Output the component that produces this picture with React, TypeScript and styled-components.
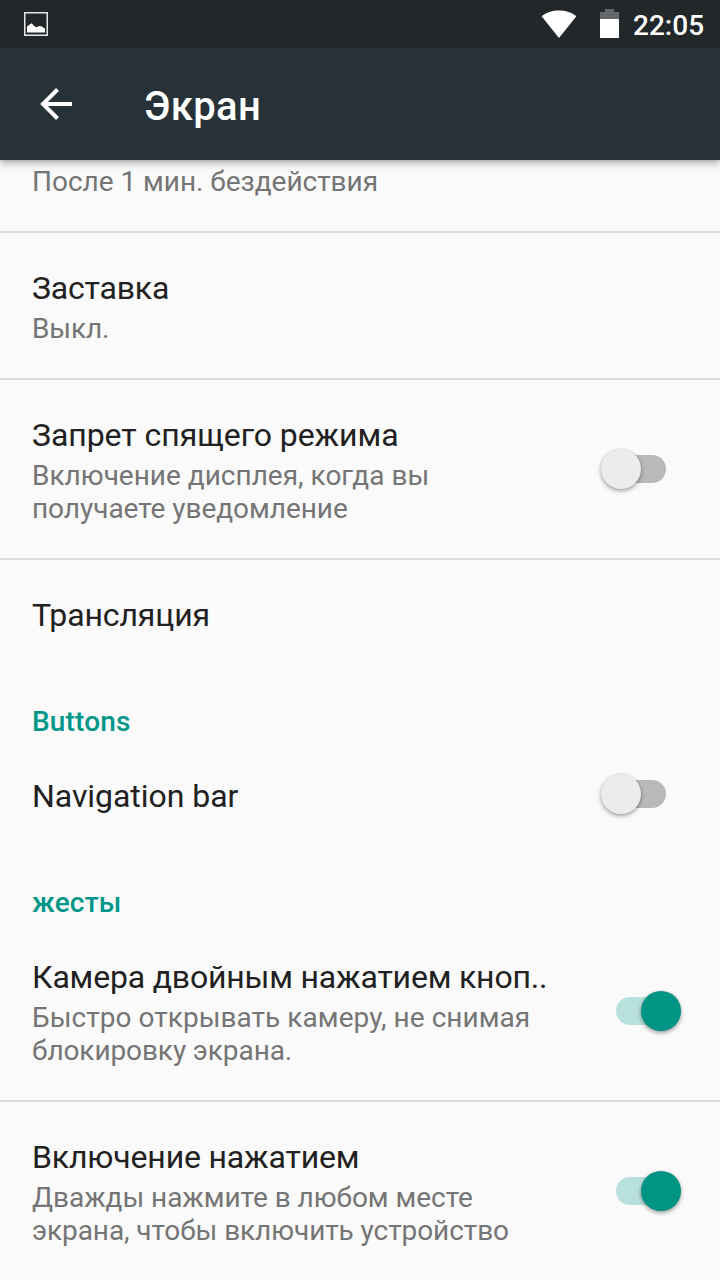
import React from "react";
import styled, { createGlobalStyle } from "styled-components";

const GlobalStyle = createGlobalStyle`
  *, *::before, *::after { box-sizing: border-box; }
  html, body { margin: 0; padding: 0; background: #fafafa; }
  body { font-family: Roboto, "Noto Sans", sans-serif; overflow: hidden; }
`;

const Screen = styled.div`
  display: flex;
  flex-direction: column;
  width: 720px;
  height: 1280px;
  overflow: hidden;
  background: #fafafa;
`;

const StatusBar = styled.header`
  position: relative;
  z-index: 2;
  display: flex;
  align-items: center;
  flex: none;
  height: 48px;
  padding: 0 16px 0 24px;
  background: #22272a;
`;

const StatusIcons = styled.div`
  display: flex;
  align-items: center;
  margin-left: auto;
`;

const WifiIcon = styled.svg`
  display: block;
  margin-right: 23px;
`;

const BatteryIcon = styled.svg`
  display: block;
  margin: 0 14px 2px 0;
`;

const Clock = styled.time`
  width: 71px;
  padding-top: 3px;
  color: #fff;
  font-size: 28px;
  font-weight: 500;
  line-height: 34px;
  white-space: nowrap;
`;

const Toolbar = styled.div`
  position: relative;
  z-index: 1;
  display: flex;
  align-items: center;
  flex: none;
  height: 112px;
  padding-left: 40px;
  background: #273238;
  box-shadow: 0 2px 8px rgba(0, 0, 0, 0.42);
`;

const BackButton = styled.button`
  display: flex;
  width: 32px;
  height: 32px;
  padding: 0;
  border: 0;
  background: none;
`;

const Heading = styled.h1`
  margin: 0 0 0 72px;
  padding-top: 6px;
  color: #fff;
  font-size: 40px;
  font-weight: 500;
  letter-spacing: 0.35px;
  line-height: 48px;
`;

const List = styled.main`
  display: flex;
  flex-direction: column;
`;

const Row = styled.section<{ $divided?: boolean; $clipped?: boolean }>`
  display: flex;
  align-items: center;
  justify-content: space-between;
  flex: none;
  padding: ${(p) => (p.$clipped ? "5px" : "36px")} 39px 33px 32px;
  border-bottom: ${(p) => (p.$divided ? "2px solid #dadada" : "0")};
`;

const Title = styled.h2<{ $tracking: number }>`
  margin: 0;
  color: #212121;
  font-size: 32px;
  font-weight: 400;
  letter-spacing: ${(p) => p.$tracking}px;
  line-height: 38px;
  white-space: nowrap;
`;

const Summary = styled.p<{ $flush?: boolean }>`
  margin: ${(p) => (p.$flush ? "0" : "5px")} 0 0;
  color: #757575;
  font-size: 28px;
  line-height: 33px;
`;

const SummaryLine = styled.span<{ $tracking: number }>`
  display: block;
  letter-spacing: ${(p) => p.$tracking}px;
  white-space: nowrap;
`;

const Category = styled.h3`
  flex: none;
  height: 74px;
  margin: 0;
  padding: 38px 32px 0;
  color: #009688;
  font-size: 28px;
  font-weight: 500;
  letter-spacing: 0.15px;
  line-height: 33px;
`;

const Track = styled.div<{ $on: boolean }>`
  display: flex;
  align-items: center;
  justify-content: ${(p) => (p.$on ? "flex-end" : "flex-start")};
  flex: none;
  width: 50px;
  height: 28px;
  margin: 0 15px 4px;
  border-radius: 14px;
  background: ${(p) => (p.$on ? "#b8e0dc" : "#b9b9b9")};
`;

const Thumb = styled.span<{ $on: boolean }>`
  flex: none;
  width: 40px;
  height: 40px;
  margin: 0 -15px;
  border-radius: 50%;
  background: ${(p) => (p.$on ? "#009485" : "#ececec")};
  box-shadow: 0 2px 4px rgba(0, 0, 0, 0.35), 0 0 2px rgba(0, 0, 0, 0.12);
`;

function Toggle({ on }: { on: boolean }) {
  return (
    <Track $on={on} role="switch" aria-checked={on}>
      <Thumb $on={on} />
    </Track>
  );
}

interface Line {
  text: string;
  tracking?: number;
}

interface SettingProps {
  title?: string;
  tracking?: number;
  summary?: Line[];
  on?: boolean;
  divided?: boolean;
}

function Setting({ title, tracking = 0, summary, on, divided }: SettingProps) {
  return (
    <Row $divided={divided} $clipped={!title}>
      <div>
        {title && <Title $tracking={tracking}>{title}</Title>}
        {summary && (
          <Summary $flush={!title}>
            {summary.map((line) => (
              <SummaryLine key={line.text} $tracking={line.tracking ?? 0}>
                {line.text}
              </SummaryLine>
            ))}
          </Summary>
        )}
      </div>
      {on !== undefined && <Toggle on={on} />}
    </Row>
  );
}

export default function App() {
  return (
    <>
      <GlobalStyle />
      <Screen>
        <StatusBar>
          <svg width="24" height="24" viewBox="0 0 24 24">
            <rect x="0.75" y="0.75" width="22.5" height="22.5" fill="none" stroke="#e4e5e5" strokeWidth="1.5" />
            <path d="M3 20.5V14.5L5 13L7.5 11.3L9.5 13.2L11.5 15H13L15.5 14L18 14.5L19 15.5L21 16.5V20.5Z" fill="#fff" />
          </svg>
          <StatusIcons>
            <WifiIcon width="36" height="30" viewBox="0 0 36 30">
              <path d="M0.6 7.3C9.5-0.5 26.5-0.5 35.4 7.3L18 29Z" fill="#fff" />
            </WifiIcon>
            <BatteryIcon width="19" height="30" viewBox="0 0 19 30">
              <path d="M0 4H5V1H14V4H19V11H0Z" fill="#64686a" />
              <path d="M0 11H19V30H0Z" fill="#fff" />
            </BatteryIcon>
            <Clock>22:05</Clock>
          </StatusIcons>
        </StatusBar>
        <Toolbar>
          <BackButton aria-label="Назад">
            <svg width="32" height="32" viewBox="0 0 32 32" fill="none" stroke="#fff" strokeWidth="4">
              <path d="M32 16H3M17.5 1.5L3 16L17.5 30.5" />
            </svg>
          </BackButton>
          <Heading>Экран</Heading>
        </Toolbar>
        <List>
          <Setting summary={[{ text: "После 1 мин. бездействия", tracking: -0.03 }]} divided />
          <Setting title="Заставка" tracking={-0.2} summary={[{ text: "Выкл.", tracking: -0.1 }]} divided />
          <Setting
            title="Запрет спящего режима"
            tracking={-0.06}
            summary={[
              { text: "Включение дисплея, когда вы" },
              { text: "получаете уведомление", tracking: -0.04 },
            ]}
            on={false}
            divided
          />
          <Setting title="Трансляция" tracking={-0.1} />
          <Category>Buttons</Category>
          <Setting title="Navigation bar" tracking={-0.05} on={false} />
          <Category>жесты</Category>
          <Setting
            title="Камера двойным нажатием кноп.."
            tracking={-0.18}
            summary={[
              { text: "Быстро открывать камеру, не снимая", tracking: 0.05 },
              { text: "блокировку экрана.", tracking: -0.1 },
            ]}
            on
            divided
          />
          <Setting
            title="Включение нажатием"
            tracking={-0.15}
            summary={[
              { text: "Дважды нажмите в любом месте", tracking: -0.04 },
              { text: "экрана, чтобы включить устройство", tracking: -0.08 },
            ]}
            on
          />
        </List>
      </Screen>
    </>
  );
}
